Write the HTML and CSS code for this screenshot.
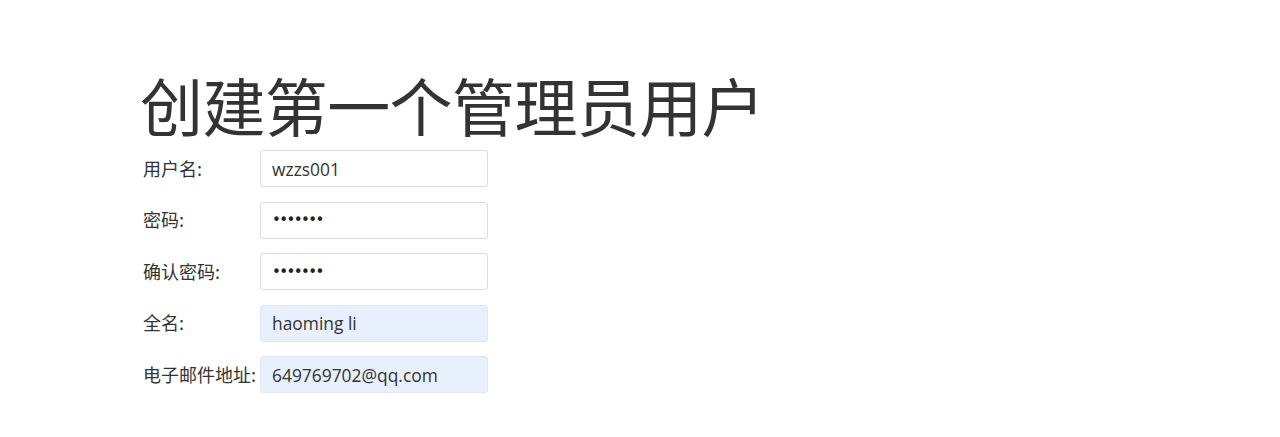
FILE: index.html
```html
<!DOCTYPE html>
<html lang="zh-CN">
<head>
  <meta charset="UTF-8">
  <title>创建第一个管理员用户</title>
  <link rel="stylesheet" href="styles.css">
</head>
<body>
  <div class="container">
    <h1>创建第一个管理员用户</h1>
    <form class="setup-form">
      <label for="username">用户名:</label>
      <input type="text" id="username" value="wzzs001">

      <label for="password1">密码:</label>
      <input type="password" id="password1" value="1234567">

      <label for="password2">确认密码:</label>
      <input type="password" id="password2" value="1234567">

      <label for="fullname">全名:</label>
      <input type="text" id="fullname" class="filled" value="haoming li">

      <label for="email">电子邮件地址:</label>
      <input type="text" id="email" class="filled" value="649769702@qq.com">
    </form>
  </div>
</body>
</html>
```

FILE: styles.css
```css
body {
  font-family: "Noto Sans CJK SC", "Open Sans", sans-serif;
  margin: 0;
  color: #333;
  background: #fff;
}
.container {
  padding: 69px 0 0 140px;
}
h1 {
  font-size: 63px;
  font-weight: 400;
  line-height: 70px;
  margin: 0 0 11px;
  letter-spacing: -0.6px;
}
.setup-form {
  display: grid;
  grid-template-columns: 117px 228px;
  row-gap: 14.5px;
  align-items: center;
  margin-left: 3px;
}
.setup-form label {
  font-size: 18px;
  line-height: 24px;
  margin-top: -2px;
}
.setup-form input {
  box-sizing: border-box;
  height: 37px;
  width: 228px;
  border: 1px solid #dcdcdc;
  border-radius: 3px;
  padding: 0 11px;
  font-family: "Open Sans", sans-serif;
  font-size: 17.4px;
  color: #333;
  background: #fff;
  outline: none;
}
.setup-form input[type="password"] {
  font-family: "DejaVu Sans", sans-serif;
  font-size: 15px;
  letter-spacing: -1.6px;
  color: #222;
}
.setup-form input.filled {
  background: #e8f0fe;
  border-color: #e2e6ee;
}
```
